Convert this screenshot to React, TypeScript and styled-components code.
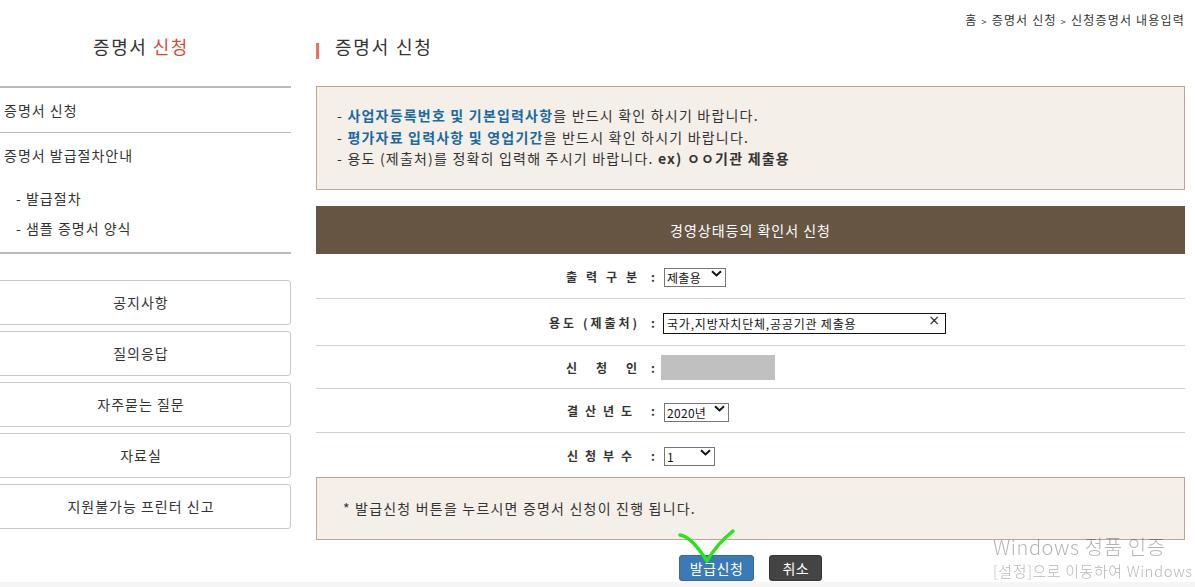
import React from 'react';
import styled, { createGlobalStyle } from 'styled-components';

const GlobalStyle = createGlobalStyle`
  html, body {
    margin: 0;
    padding: 0;
    background: #fff;
    overflow: hidden;
  }
  body {
    font-family: 'Noto Sans CJK KR', 'Noto Sans', sans-serif;
    color: #333;
    letter-spacing: 1px;
  }
`;

const Page = styled.div`
  display: flex;
  align-items: flex-start;
`;

/* ---------- sidebar ---------- */

const Sidebar = styled.aside`
  width: 300px;
  margin-left: -9px;
  flex-shrink: 0;
`;

const SideTitle = styled.h2`
  margin: 34px 0 28px;
  height: 24px;
  line-height: 24px;
  font-size: 18px;
  font-weight: 400;
  letter-spacing: 1.5px;
  text-align: center;
  color: #333;

  em {
    font-style: normal;
    color: #d9473b;
  }
`;

const SideMenu = styled.ul`
  list-style: none;
  margin: 0;
  padding: 0;
  border-top: 2px solid #bbb;
  border-bottom: 2px solid #bbb;
`;

const SideGroup = styled.li<{ $last?: boolean }>`
  padding: ${p => (p.$last ? '11px 0 9px' : '0')};
  border-bottom: ${p => (p.$last ? 'none' : '1px solid #bbb')};
`;

const SideLink = styled.div<{ $h: number }>`
  height: ${p => p.$h}px;
  line-height: ${p => p.$h}px;
  padding-left: 13px;
  font-size: 14px;
  color: #333;
`;

const SubList = styled.ul`
  list-style: none;
  margin: 17px 0 0;
  padding: 0;
`;

const SubItem = styled.li`
  height: 30px;
  line-height: 30px;
  padding-left: 25px;
  font-size: 14px;
  color: #333;
`;

const QuickList = styled.div`
  display: flex;
  flex-direction: column;
  gap: 6px;
  margin-top: 26px;
`;

const QuickButton = styled.div`
  height: 43px;
  line-height: 43px;
  border: 1px solid #c8c8c8;
  border-radius: 3px;
  text-align: center;
  font-size: 14px;
  color: #333;
`;

/* ---------- main ---------- */

const Main = styled.main`
  width: 869px;
  margin-left: 25px;
  flex-shrink: 0;
`;

const Breadcrumb = styled.div`
  margin-top: 12px;
  height: 16px;
  line-height: 16px;
  font-size: 12px;
  letter-spacing: 1.2px;
  text-align: right;
  color: #333;

  span {
    font-size: 9px;
    margin: 0 4px;
  }
`;

const PageTitle = styled.h3`
  display: flex;
  align-items: flex-end;
  gap: 16px;
  margin: 6px 0 0;
  height: 24px;
  line-height: 24px;
  font-size: 18px;
  font-weight: 400;
  letter-spacing: 1.8px;
  color: #333;
`;

const TitleBar = styled.i`
  width: 3px;
  height: 16px;
  margin-bottom: -1px;
  background: #e8735d;
`;

const NoticeBox = styled.div<{ $h: number; $pad: string }>`
  box-sizing: border-box;
  height: ${p => p.$h}px;
  padding: ${p => p.$pad};
  background: #f4efe9;
  border: 1px solid #bca593;
  font-size: 14px;
  line-height: 21.5px;
  letter-spacing: 1.2px;
  color: #333;

  p {
    margin: 0;
  }
  b {
    color: #1b6a9f;
  }
  strong {
    color: #333;
  }
`;

const FormTable = styled.section`
  margin-top: 16px;
`;

const TableHead = styled.div`
  height: 48px;
  line-height: 48px;
  background: #675544;
  color: #fff;
  text-align: center;
  font-size: 14px;
`;

const Row = styled.div<{ $h: number; $last?: boolean }>`
  display: grid;
  grid-template-columns: 340px 1fr;
  align-items: center;
  height: ${p => p.$h}px;
  border-bottom: ${p => (p.$last ? 'none' : '1px solid #d8cfc4')};
`;

const LabelCell = styled.div`
  display: flex;
  justify-content: flex-end;
  align-items: center;
  padding-right: 1px;
  font-size: 12px;
  font-weight: 700;
  letter-spacing: 0;
  color: #333;
  white-space: pre;
`;

const LabelText = styled.span<{ $ls: number }>`
  letter-spacing: ${p => p.$ls}px;
`;

const Colon = styled.span<{ $gap: number }>`
  margin-left: ${p => p.$gap}px;
`;

const FieldCell = styled.div`
  display: flex;
  align-items: center;
  padding-left: 8px;
`;

const SelectWrap = styled.span`
  position: relative;
  display: inline-block;
`;

const Select = styled.select<{ $w: number }>`
  appearance: none;
  box-sizing: border-box;
  width: ${p => p.$w}px;
  height: 19px;
  margin: 0;
  padding: 0 0 0 2px;
  border: 1px solid #767676;
  border-radius: 0;
  background: #fff;
  font-family: 'Noto Sans CJK KR', 'Liberation Sans', sans-serif;
  font-size: 12px;
  letter-spacing: 0.3px;
  line-height: 17px;
  color: #111;
`;

const Chevron = styled.svg`
  position: absolute;
  right: 4px;
  top: 6px;
  pointer-events: none;
`;

const TextWrap = styled.span`
  position: relative;
  display: inline-block;
  margin-left: -1px;
`;

const TextInput = styled.input`
  box-sizing: border-box;
  width: 283px;
  height: 21px;
  margin: 0;
  padding: 0 20px 0 3px;
  border: 1px solid #111;
  border-radius: 0;
  font-family: 'Noto Sans CJK KR', sans-serif;
  font-size: 12px;
  letter-spacing: 0.8px;
  color: #111;
  outline: none;
`;

const ClearMark = styled.span`
  position: absolute;
  right: 5px;
  top: 0;
  font-family: 'DejaVu Sans', sans-serif;
  font-size: 14px;
  line-height: 21px;
  color: #222;
`;

const Masked = styled.div`
  width: 114px;
  height: 25px;
  margin-left: -3px;
  background: #c0c0c0;
`;

const ButtonRow = styled.div`
  display: flex;
  justify-content: center;
  gap: 15px;
  margin-top: 15px;
`;

const ActionButton = styled.button<{ $variant: 'primary' | 'dark' }>`
  height: 26px;
  padding: 0 ${p => (p.$variant === 'primary' ? 10 : 12)}px;
  border: 1px solid ${p => (p.$variant === 'primary' ? '#2e6a9f' : '#333')};
  border-radius: 3px;
  background: ${p => (p.$variant === 'primary' ? '#3b7ab4' : '#444')};
  color: #fff;
  font-family: 'Noto Sans CJK KR', sans-serif;
  font-size: 14px;
  letter-spacing: 0.5px;
  line-height: 24px;
`;

const Footer = styled.footer`
  height: 20px;
  margin-top: 1px;
  background: #f5f5f5;
`;

/* ---------- overlays ---------- */

const Watermark = styled.div`
  position: fixed;
  left: 993px;
  top: 534px;
  color: rgba(0, 0, 0, 0.3);
  font-family: 'Noto Sans CJK KR', 'Noto Sans', sans-serif;
  font-weight: 300;
  letter-spacing: 0.6px;
  white-space: nowrap;
  pointer-events: none;

  div:first-child {
    font-size: 20px;
    line-height: 26px;
  }
  div:last-child {
    font-size: 15px;
    line-height: 22px;
  }
`;

const CheckMark = styled.svg`
  position: fixed;
  left: 676px;
  top: 527px;
  pointer-events: none;
`;

const ChevronIcon = () => (
  <Chevron width="11" height="7" viewBox="0 0 11 7">
    <path d="M1 1.2 L5.5 5.4 L10 1.2" fill="none" stroke="#111" strokeWidth="2" />
  </Chevron>
);

const Dropdown: React.FC<{ w: number; value: string; options: string[] }> = ({ w, value, options }) => (
  <SelectWrap>
    <Select $w={w} defaultValue={value}>
      {options.map(o => (
        <option key={o}>{o}</option>
      ))}
    </Select>
    <ChevronIcon />
  </SelectWrap>
);

const FormRow: React.FC<{
  label: string;
  ls: number;
  gap?: number;
  h: number;
  last?: boolean;
  children: React.ReactNode;
}> = ({ label, ls, gap = 14, h, last, children }) => (
  <Row $h={h} $last={last}>
    <LabelCell>
      <LabelText $ls={ls}>{label.slice(0, -1)}</LabelText>
      <span>{label.slice(-1)}</span>
      <Colon $gap={gap}>:</Colon>
    </LabelCell>
    <FieldCell>{children}</FieldCell>
  </Row>
);

const quickMenus = ['공지사항', '질의응답', '자주묻는 질문', '자료실', '지원불가능 프린터 신고'];

export default function App() {
  return (
    <>
      <GlobalStyle />
      <Page>
        <Sidebar>
          <SideTitle>
            증명서 <em>신청</em>
          </SideTitle>
          <SideMenu>
            <SideGroup>
              <SideLink $h={44}>증명서 신청</SideLink>
            </SideGroup>
            <SideGroup $last>
              <SideLink $h={22}>증명서 발급절차안내</SideLink>
              <SubList>
                <SubItem>- 발급절차</SubItem>
                <SubItem>- 샘플 증명서 양식</SubItem>
              </SubList>
            </SideGroup>
          </SideMenu>
          <QuickList>
            {quickMenus.map(m => (
              <QuickButton key={m}>{m}</QuickButton>
            ))}
          </QuickList>
        </Sidebar>

        <Main>
          <Breadcrumb>
            홈<span>&gt;</span>증명서 신청<span>&gt;</span>신청증명서 내용입력
          </Breadcrumb>
          <PageTitle>
            <TitleBar />
            증명서 신청
          </PageTitle>

          <NoticeBox $h={104} $pad="18px 20px 0" style={{ marginTop: 28 }}>
            <p>
              - <b>사업자등록번호 및 기본입력사항</b>을 반드시 확인 하시기 바랍니다.
            </p>
            <p>
              - <b>평가자료 입력사항 및 영업기간</b>을 반드시 확인 하시기 바랍니다.
            </p>
            <p>
              - 용도 (제출처)를 정확히 입력해 주시기 바랍니다. <strong>ex) ㅇㅇ기관 제출용</strong>
            </p>
          </NoticeBox>

          <FormTable>
            <TableHead>경영상태등의 확인서 신청</TableHead>
            <FormRow label="출력구분" ls={9} h={44}>
              <Dropdown w={62} value="제출용" options={['제출용', '보관용']} />
            </FormRow>
            <FormRow label="용도 (제출처)" ls={3} h={46}>
              <TextWrap>
                <TextInput defaultValue="국가,지방자치단체,공공기관 제출용" />
                <ClearMark>×</ClearMark>
              </TextWrap>
            </FormRow>
            <FormRow label="신청인" ls={19} h={42}>
              <Masked />
            </FormRow>
            <FormRow label="결산년도" ls={7} gap={19} h={43}>
              <Dropdown w={65} value="2020년" options={['2020년', '2019년', '2018년']} />
            </FormRow>
            <FormRow label="신청부수" ls={7} gap={19} h={44} last>
              <Dropdown w={51} value="1" options={['1', '2', '3', '4', '5']} />
            </FormRow>
          </FormTable>

          <NoticeBox $h={63} $pad="20px 26px 0">
            <p>* 발급신청 버튼을 누르시면 증명서 신청이 진행 됩니다.</p>
          </NoticeBox>

          <ButtonRow>
            <ActionButton $variant="primary">발급신청</ActionButton>
            <ActionButton $variant="dark">취소</ActionButton>
          </ButtonRow>
        </Main>
      </Page>
      <Footer />

      <CheckMark width="62" height="40" viewBox="0 0 62 40">
        <path
          d="M4 8 C 12 9, 22 20, 31 34 C 38 22, 47 12, 57 4"
          fill="none"
          stroke="#2be21b"
          strokeWidth="3.5"
          strokeLinecap="round"
          strokeLinejoin="round"
        />
      </CheckMark>

      <Watermark>
        <div>Windows 정품 인증</div>
        <div>[설정]으로 이동하여 Windows</div>
      </Watermark>
    </>
  );
}
